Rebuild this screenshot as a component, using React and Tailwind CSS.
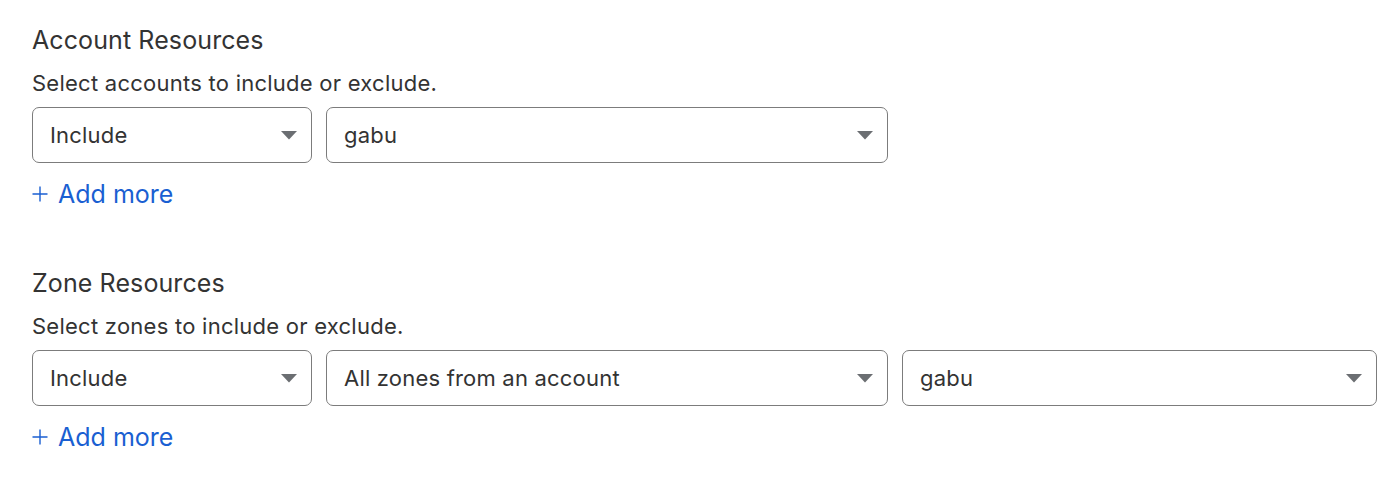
import React from 'react';

function Caret() {
  return (
    <svg width="16" height="9" viewBox="0 0 16 9" className="shrink-0">
      <path d="M0 0 L16 0 L8 8.5 Z" fill="#6b6e72" />
    </svg>
  );
}

function PlusIcon() {
  return (
    <svg width="16" height="16" viewBox="0 0 16 16" className="shrink-0">
      <path d="M8 0.5 V15.5 M0.5 8 H15.5" stroke="#1a5fd2" strokeWidth="1.4" fill="none" />
    </svg>
  );
}

function SelectBox({ value, width }) {
  return (
    <div
      className={`${width} h-[56px] flex items-center justify-between pl-[17px] pr-[14px] border-[1.5px] border-[#7c7c7c] rounded-[7px] bg-white text-[22px] tracking-[0.2px] text-[#333]`}
    >
      <span>{value}</span>
      <Caret />
    </div>
  );
}

function AddMore() {
  return (
    <button className="mt-[15px] h-[32px] flex items-center gap-[10px] text-[25px] leading-[32px] text-[#1a5fd2]">
      <PlusIcon />
      <span>Add more</span>
    </button>
  );
}

function ResourceSection({ title, desc, selects }) {
  return (
    <div>
      <h2 className="text-[25px] leading-[32px] tracking-[0.1px] text-[#333]">{title}</h2>
      <p className="mt-[13px] text-[22px] leading-[28px] tracking-[0.25px] text-[#333]">{desc}</p>
      <div className="mt-[10px] flex gap-[14px]">
        {selects.map((s, i) => (
          <SelectBox key={i} value={s.value} width={s.width} />
        ))}
      </div>
      <AddMore />
    </div>
  );
}

export default function App() {
  return (
    <div className="w-[1400px] h-[479px] bg-white pl-[32px] pt-[24px] font-['Inter',sans-serif]">
      <ResourceSection
        title="Account Resources"
        desc="Select accounts to include or exclude."
        selects={[
          { value: 'Include', width: 'w-[280px]' },
          { value: 'gabu', width: 'w-[562px]' },
        ]}
      />
      <div className="mt-[57px]">
        <ResourceSection
          title="Zone Resources"
          desc="Select zones to include or exclude."
          selects={[
            { value: 'Include', width: 'w-[280px]' },
            { value: 'All zones from an account', width: 'w-[562px]' },
            { value: 'gabu', width: 'w-[475px]' },
          ]}
        />
      </div>
    </div>
  );
}
